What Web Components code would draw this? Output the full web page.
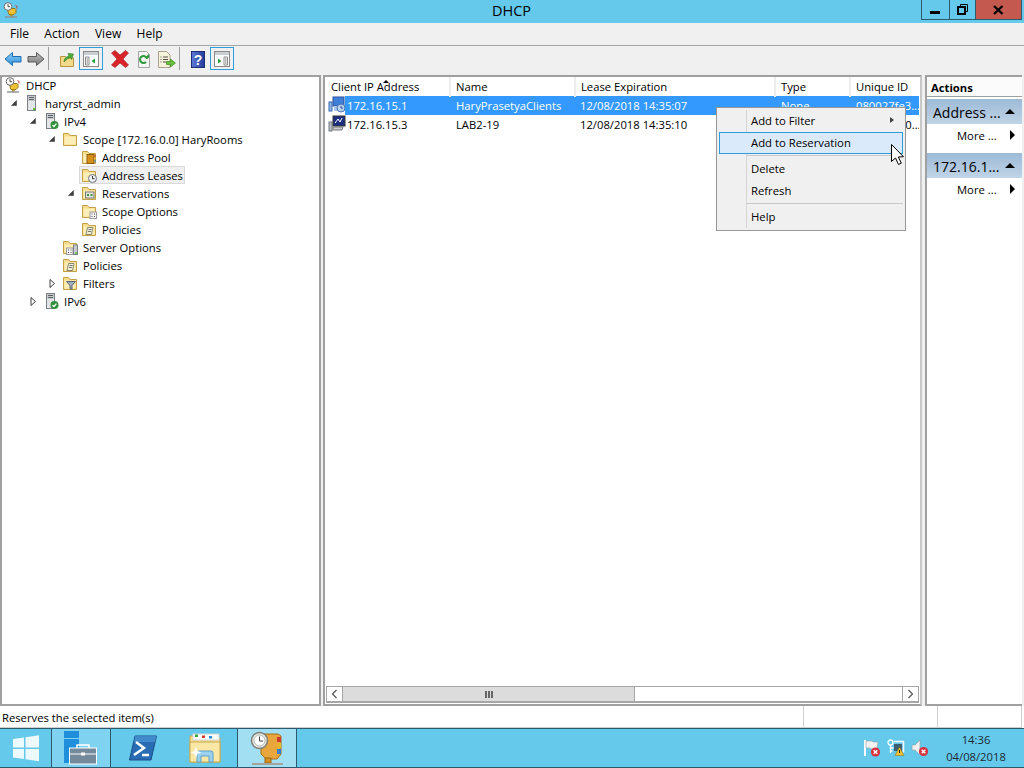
<!DOCTYPE html>
<html>
<head>
<meta charset="utf-8">
<title>DHCP</title>
<style>
  html, body { margin: 0; height: 100%; overflow: hidden; }
  body { font: 11.25px "Open Sans", "Noto Sans", sans-serif; color: #000; }
</style>
</head>
<body>
<dhcp-app>
  <title-bar slot="title">DHCP</title-bar>
  <menu-bar slot="menu"></menu-bar>
  <tool-bar slot="tools"></tool-bar>
  <tree-pane slot="tree"></tree-pane>
  <lease-list slot="list"></lease-list>
  <actions-pane slot="actions"></actions-pane>
  <status-bar slot="status">Reserves the selected item(s)</status-bar>
  <task-bar slot="tasks"></task-bar>
  <context-menu slot="popup"></context-menu>
</dhcp-app>

<script>
const folderBase = `<path d="M1.500 2.500h5l1.500 2h6.500v10h-13z" fill="#f8dd8c" stroke="#c39f45"/><path d="M2.500 5.500h11v8h-11z" fill="#fdeeb8"/>`
const tower = `<rect x="3.500" y=".5" width="8" height="15" fill="#c8ccd0" stroke="#7b8085"/><path d="M5 2.500h5M5 4.500h5" stroke="#5c6166"/><rect x="4" y="6" width="7" height="9" fill="#e3e5e7"/>`
const check = `<circle cx="11.500" cy="12" r="4" fill="#2f8f3a"/><path d="M9.500 12l1.500 1.600 2.400-3" fill="none" stroke="#fff" stroke-width="1.300"/>`
const redX = `<circle cx="11" cy="11.500" r="4.600" fill="#d8323c"/><path d="M9.200 9.700l3.600 3.600M12.800 9.700l-3.600 3.600" stroke="#fff" stroke-width="1.500"/>`
const clockPost = `<path d="M4 6.500h8l1 1v3l-2 2h-5z" fill="#efc234" stroke="#97761a"/><circle cx="5" cy="4.500" r="3.800" fill="#fff" stroke="#6d6d6d"/><path d="M5 2.200v2.500h2" fill="none" stroke="#444"/><path d="M12.500 3.500l1.500 1v2" fill="none" stroke="#c33"/><rect x="7" y="12" width="2.500" height="2.500" fill="#b58a1d"/><path d="M2 15h12" stroke="#8f8f8f" stroke-width="1.400"/>`
const paneWindow = `<rect x="4.500" y="4.500" width="15" height="15" fill="#fbfbfb" stroke="#8a8a8a"/><rect x="5" y="5" width="14" height="3" fill="#c9ced2"/>`

const ICONS = {
  dhcp: [16, clockPost],
  server: [16, tower + `<rect x="9" y="13" width="2" height="2" fill="#5fc23c"/>`],
  ipv: [16, tower + check],
  folder: [16, folderBase],
  pool: [16, folderBase + `<rect x="6" y="5.500" width="7" height="9" fill="#d6901a" stroke="#8f5f10"/><path d="M14 6.500v1" stroke="#d33" stroke-width="2"/><path d="M14 9v1" stroke="#e5b62b" stroke-width="2"/><path d="M14 11.500v1" stroke="#2f7fd0" stroke-width="2"/>`],
  leases: [16, folderBase + `<circle cx="11.500" cy="11.500" r="4" fill="#eef1f3" stroke="#6a7078"/><path d="M11.500 9v2.700h2" fill="none" stroke="#333"/>`],
  reservations: [16, folderBase + `<rect x="4.500" y="7" width="8.500" height="6" fill="#e8e8e0" stroke="#777"/><path d="M6 10h2M9.500 10h2" stroke="#3c8f3c" stroke-width="2"/>`],
  options: [16, folderBase + `<rect x="9" y="9" width="6.500" height="6.500" fill="#f4f4f4" stroke="#9a9a9a"/><path d="M10.500 11h1M13 11h1M10.500 13.500h1M13 13.500h1" stroke="#555"/>`],
  policies: [16, folderBase + `<path d="M6.500 6.500h5.500l-1.500 7h-5.500z" fill="#f0edd8" stroke="#8a8a70"/><path d="M7.500 8.500h3M7 10.500h3" stroke="#777"/>`],
  serverOptions: [16, folderBase + `<rect x="4.500" y="9" width="6.500" height="6.500" fill="#f4f4f4" stroke="#9a9a9a"/><path d="M6 11h1M8.500 11h1M6 13.500h1M8.500 13.500h1" stroke="#555"/><rect x="11.500" y="6" width="4" height="9.500" fill="#c8ccd0" stroke="#7b8085"/><path d="M13 14h2" stroke="#5fc23c" stroke-width="1.500"/>`],
  filters: [16, folderBase + `<path d="M4.500 6.500h9l-3.500 4v4l-2-1v-3z" fill="#9fb1bd" stroke="#5a6670"/>`],
  leaseActive: [18, `<rect x="1" y="6" width="3" height="9" fill="#8fb6e8" stroke="#3b6bb0"/><rect x="5" y="1" width="11" height="9" fill="#3f7fd8" stroke="#28509a"/><rect x="6" y="10" width="6" height="5" fill="#a9c6ee"/><circle cx="13" cy="12" r="4" fill="#bcd3f1" stroke="#4a74b4"/><path d="M13 9.800v2.300h2" fill="none" stroke="#274f8f"/>`],
  leaseClient: [18, `<rect x="1" y="7" width="3" height="9" fill="#b8c0c8" stroke="#707880"/><rect x="5" y="1" width="12" height="10" fill="#1c2f7e" stroke="#333"/><path d="M7 8l3-4 2 3 2-4" stroke="#fff" fill="none"/><path d="M5 12h10l-1 3h-9z" fill="#c9cdd1" stroke="#777"/>`],
  back: [20, `<defs><linearGradient id="bk" x1="0" y1="0" x2="0" y2="1"><stop offset="0" stop-color="#8fd0f7"/><stop offset="1" stop-color="#2f8bd8"/></linearGradient></defs><path d="M2 10l7.500-6.500v4h8.500v5.500h-8.500v3.500z" fill="url(#bk)" stroke="#1d6fb5"/>`],
  forward: [20, `<defs><linearGradient id="fw" x1="0" y1="0" x2="0" y2="1"><stop offset="0" stop-color="#bdbdbd"/><stop offset="1" stop-color="#7a7a7a"/></linearGradient></defs><path d="M18 10l-7.500-6.500v4h-8.500v5.500h8.500v3.500z" fill="url(#fw)" stroke="#5c5c5c"/>`],
  up: [20, `<path d="M3.500 7.500h5l1 1.500h7v8.500h-13z" fill="#f5d98a" stroke="#b8963f"/><path d="M7 13c0-3.500 2.500-5.500 5-6l-1-2.500 5.500.5-2 5.500-1-2c-2.500.5-4 2-6.500 4.500z" fill="#4cb03a" stroke="#2b7322" stroke-width=".6"/>`],
  paneHide: [24, paneWindow + `<path d="M6.500 10h3.500v8h-3.500z" fill="#fff" stroke="#8c8c8c"/><path d="M7.500 12h1.500M7.500 14h1.500M7.500 16h1.500" stroke="#777"/><path d="M16 11.500v5l-3.500-2.500z" fill="#2a9d3c"/>`],
  paneShow: [24, paneWindow + `<path d="M14 10h3.500v8h-3.500z" fill="#fff" stroke="#8c8c8c"/><path d="M15 12h1.500M15 14h1.500M15 16h1.500" stroke="#777"/><path d="M8 11.500v5l3.500-2.500z" fill="#2a9d3c"/>`],
  remove: [20, `<path d="M1.500 4l3.500-2.500 5 4.500 5.500-4.500 3 2.500-5.500 6 5.500 6-3 2.500-5.500-4.500-5 4.500-3.500-2.500 5.500-6z" fill="#d8232a" stroke="#a81a1f" stroke-width=".6"/>`],
  refresh: [20, `<path d="M4.500 2.500h8l3 3v13h-11z" fill="#f6f6f6" stroke="#a3a3a3"/><path d="M13 10a3.500 3.500 0 1 0-1 3" fill="none" stroke="#2f9a3a" stroke-width="2"/><path d="M10.500 9h4.500v-4z" fill="#2f9a3a"/>`],
  exportList: [20, `<path d="M1.500 2.500h8l3.500 3.500v12.500h-11.500z" fill="#f7f3dd" stroke="#a6a28c"/><path d="M3.500 8h1M6 8h5M3.500 10.500h1M6 10.500h5M3.500 13h1M6 13h3" stroke="#55534a"/><path d="M9.500 12.500h4v-2.500l5 4-5 4v-2.500h-4z" fill="#6bbd3e" stroke="#3e8b1f" stroke-width=".7"/>`],
  help: [20, `<defs><linearGradient id="hp" x1="0" y1="0" x2="1" y2="0"><stop offset="0" stop-color="#5d7bd6"/><stop offset="1" stop-color="#233a9a"/></linearGradient></defs><rect x="3.500" y="2.500" width="13" height="16" fill="url(#hp)" stroke="#1c2d75"/><text x="10" y="15.500" font-family="Liberation Sans, sans-serif" font-size="14" font-weight="700" text-anchor="middle" fill="#fff">?</text>`],
  start: [28, `<path d="M1 5l11-1.500v10h-11zM13.500 3.200l13.500-2v12.300h-13.500zM1 15h11v10l-11-1.500zM13.500 15h13.500v12.300l-13.500-2z" fill="#fff" opacity=".88"/>`],
  serverManager: [36, `<rect x="1" y="1" width="15" height="7" fill="#1f8fdc"/><rect x="1" y="9" width="15" height="24" fill="#1f8fdc"/><rect x="6.500" y="18" width="27" height="16" fill="#74899a" stroke="#fff"/><path d="M14 18v-3h12v3" fill="none" stroke="#fff" stroke-width="1.500"/><path d="M7 24h26" stroke="#fff"/><rect x="18" y="22.500" width="4" height="3" fill="#fff"/>`],
  powershell: [30, `<path d="M7 3h21.500l-5.500 24h-21.500z" fill="#2a6cb3" stroke="#184d8a"/><path d="M7 3h21.500l-1.500 6h-21z" fill="#4b97d6" opacity=".7"/><path d="M8 9l8 6-10 7" fill="none" stroke="#fff" stroke-width="2.500"/><path d="M14 22h7" stroke="#fff" stroke-width="2.500"/>`],
  explorer: [34, `<path d="M1 5h14l3 2h13v24h-30z" fill="#f6dd8e" stroke="#c9a94f"/><rect x="4" y="3" width="26" height="6" fill="#fff" stroke="#d6d6d6"/><rect x="6" y="3.500" width="3" height="2.500" fill="#35a53a"/><rect x="13" y="4.500" width="3" height="2.500" fill="#d33f2a"/><rect x="20" y="5" width="3" height="2.500" fill="#2f89d4"/><path d="M1 11h30v20h-30z" fill="#fbe7a6" stroke="#c9a94f"/><path d="M8 31v-9q0-2 2-2h12q2 0 2 2v9h-4v-6h-8v6z" fill="#9ad2ee" stroke="#5aa1cc"/><path d="M7 16l1.500 4 4 1.500-4 1.500-1.500 4-1.500-4-4-1.500 4-1.500z" fill="#fff" opacity=".9"/>`],
  dhcpLarge: [34, `<path d="M11 3h17l3 2v18l-4 5h-11l-5-5z" fill="#e9a63c" stroke="#a66f1b"/><rect x="27" y="6" width="4" height="5" fill="#cf3a2e"/><rect x="27" y="12" width="4" height="5" fill="#e8b62d"/><rect x="27" y="18" width="4" height="5" fill="#3a7fcb"/><circle cx="9.500" cy="9.500" r="8" fill="#e9e9e4" stroke="#7f7f78" stroke-width="1.500"/><circle cx="9.500" cy="9.500" r="5.500" fill="#fff" stroke="#b5b5ae"/><path d="M9.500 5.500v4.500h3.500" fill="none" stroke="#444"/><rect x="15" y="27" width="6" height="5" fill="#d68f22" stroke="#9c6512"/><path d="M2 33h31" stroke="#a4a49c" stroke-width="2"/>`],
  trayFlag: [18, `<path d="M2 1v16" stroke="#fff" stroke-width="2"/><path d="M3 2h6l1 1h5l-1 7h-6l-1-1h-4z" fill="#f2f2f2" stroke="#8c9aa3" stroke-width=".6"/><g transform="translate(1.500 1.500)">${redX}</g>`],
  trayNet: [18, `<circle cx="3.500" cy="3.500" r="2.500" fill="none" stroke="#fff" stroke-width="1.300"/><path d="M3.500 6v8M3.500 9h3M3.500 12h2" stroke="#fff" stroke-width="1.300"/><path d="M7 2.500h9.500v11" fill="none" stroke="#fff" stroke-width="1.500"/><rect x="7" y="5" width="8" height="7" fill="#3d5f73"/><path d="M12.500 8l4.500 8.500h-9z" fill="#f1c232" stroke="#8a6d12" stroke-width=".5"/><path d="M12.500 11v3" stroke="#222"/>`],
  traySound: [18, `<path d="M1 6h3l5-5v15l-5-5h-3z" fill="#f0f0f0" stroke="#8c9aa3" stroke-width=".6"/><g transform="translate(1.500 1)">${redX}</g>`]
}

function el(html) {
  const t = document.createElement('template')
  t.innerHTML = html
  return t
}

class AppIcon extends HTMLElement {
  connectedCallback() {
    const [size, body] = ICONS[this.getAttribute('name')]
    this.attachShadow({ mode: 'open' }).innerHTML = `
      <style>:host { display: inline-flex; flex: none; width: ${size}px; height: ${size}px; } svg { display: block; }</style>
      <svg width="${size}" height="${size}" viewBox="0 0 ${size} ${size}">${body}</svg>`
  }
}
customElements.define('app-icon', AppIcon)

const appTemplate = el(`
  <style>
    :host { display: grid; grid-template-rows: 23px 23px 28px 1fr 22px 40px; height: 768px; width: 1024px; background: #f0f0f0; position: relative; overflow: hidden; }
    .panes { display: grid; grid-template-columns: 321px 600px 97px; column-gap: 2px; padding-top: 1px; min-height: 0; }
    .panes ::slotted(*) { min-width: 0; }
  </style>
  <slot name="title"></slot>
  <slot name="menu"></slot>
  <slot name="tools"></slot>
  <div class="panes">
    <slot name="tree"></slot>
    <slot name="list"></slot>
    <slot name="actions"></slot>
  </div>
  <slot name="status"></slot>
  <slot name="tasks"></slot>
  <slot name="popup"></slot>
`)
customElements.define('dhcp-app', class extends HTMLElement {
  constructor() {
    super()
    this.attachShadow({ mode: 'open' }).appendChild(appTemplate.content.cloneNode(true))
  }
})

const titleTemplate = el(`
  <style>
    :host { display: flex; align-items: flex-start; background: #65c9ec; height: 23px; font-size: 14.5px; }
    app-icon { margin: 2px 0 0 3px; }
    .name { flex: 1; text-align: center; line-height: 22px; padding-left: 83px; }
    .buttons { display: flex; height: 19px; margin-right: 2px; border: solid #2b5a6e; border-width: 0 1px 1px; }
    .b { display: flex; align-items: center; justify-content: center; width: 27px; }
    .b + .b { border-left: 1px solid #2b5a6e; }
    .close { width: 45px; background: #c4594f; }
  </style>
  <app-icon name="dhcp"></app-icon>
  <div class="name"><slot></slot></div>
  <div class="buttons">
    <div class="b"><svg width="11" height="11"><rect x="0" y="7" width="10" height="3"/></svg></div>
    <div class="b" style="width:25px"><svg width="11" height="12"><path d="M3.500 2V.5h7v7H9" fill="none" stroke="#000"/><rect x="1" y="3" width="7" height="7" fill="none" stroke="#000" stroke-width="2"/></svg></div>
    <div class="b close"><svg width="11" height="10"><path d="M1 1l8.500 8M9.500 1l-8.500 8" stroke="#000" stroke-width="2.400"/></svg></div>
  </div>
`)
customElements.define('title-bar', class extends HTMLElement {
  constructor() {
    super()
    this.attachShadow({ mode: 'open' }).appendChild(titleTemplate.content.cloneNode(true))
  }
})

customElements.define('menu-bar', class extends HTMLElement {
  constructor() {
    super()
    this.attachShadow({ mode: 'open' }).innerHTML = `
      <style>
        :host { display: flex; height: 22px; border-bottom: 1px solid #a6a6a6; padding-left: 2.300px; line-height: 21px; font-size: 12px; }
        span { padding: 0 7.700px; }
      </style>
      ${['File', 'Action', 'View', 'Help'].map(m => `<span>${m}</span>`).join('')}`
  }
})

customElements.define('tool-bar', class extends HTMLElement {
  constructor() {
    super()
    const slot = (name, gap) => `<div class="i" style="margin-left:${gap}px"><app-icon name="${name}"></app-icon></div>`
    const on = (name, gap) => `<div class="i on" style="margin-left:${gap}px"><app-icon name="${name}"></app-icon></div>`
    this.attachShadow({ mode: 'open' }).innerHTML = `
      <style>
        :host { display: flex; align-items: flex-start; height: 28px; padding: 1px 0 0 3px; box-sizing: border-box; }
        .i { display: flex; align-items: center; justify-content: center; width: 20px; height: 23px; flex: none; }
        .on { width: 24px; height: 23px; box-sizing: border-box; border: 1px solid #2e9fdc; }
        .on app-icon { margin: -1px; }
        .sep { width: 1px; height: 23px; background: #a0a0a0; margin-left: 2px; flex: none; }
      </style>
      ${slot('back', 0)}${slot('forward', 3)}
      <div class="sep"></div>
      ${slot('up', 8)}${on('paneHide', 2)}
      ${slot('remove', 7)}${slot('refresh', 4)}${slot('exportList', 3)}
      <div class="sep"></div>
      ${slot('help', 8)}${on('paneShow', 2)}`
  }
})

customElements.define('tree-row', class extends HTMLElement {
  constructor() {
    super()
    const level = +this.getAttribute('level')
    const arrow = this.getAttribute('arrow')
    const icon = this.getAttribute('icon')
    const marks = {
      open: '<path d="M6.500 1.500v5h-5z" fill="#404040" stroke="#404040" stroke-width=".6"/>',
      closed: '<path d="M2 .5l4.500 4-4.500 4z" fill="#fff" stroke="#404040"/>'
    }
    this.attachShadow({ mode: 'open' }).innerHTML = `
      <style>
        :host { display: flex; align-items: center; height: 18px; padding-left: ${19 * level + 3}px; }
        .arrow { width: 14px; margin-left: -14px; height: 9px; flex: none; }
        .arrow svg { display: block; }
        .hit { display: flex; align-items: center; height: 16px; padding-right: 1px; margin-left: -2px; padding-left: 1px; border: 1px solid transparent; }
        :host([current]) .hit { background: #f0f0f0; border-color: #d9d9d9; }
        app-icon { margin-right: 5px; }
      </style>
      <div class="arrow">${arrow ? `<svg width="9" height="9">${marks[arrow]}</svg>` : ''}</div>
      <div class="hit"><app-icon name="${icon}"></app-icon><slot></slot></div>`
  }
})

customElements.define('tree-pane', class extends HTMLElement {
  constructor() {
    super()
    const rows = [
      [0, '', 'dhcp', 'DHCP'],
      [1, 'open', 'server', 'haryrst_admin'],
      [2, 'open', 'ipv', 'IPv4'],
      [3, 'open', 'folder', 'Scope [172.16.0.0] HaryRooms'],
      [4, '', 'pool', 'Address Pool'],
      [4, '', 'leases', 'Address Leases', true],
      [4, 'open', 'reservations', 'Reservations'],
      [4, '', 'options', 'Scope Options'],
      [4, '', 'policies', 'Policies'],
      [3, '', 'serverOptions', 'Server Options'],
      [3, '', 'policies', 'Policies'],
      [3, 'closed', 'filters', 'Filters'],
      [2, 'closed', 'ipv', 'IPv6']
    ]
    this.attachShadow({ mode: 'open' }).innerHTML = `
      <style>
        :host { display: block; box-sizing: border-box; background: #fff; border: 2px solid #a0a0a0; overflow: hidden; }
        .rows { margin-top: -1px; }
      </style>
      <div class="rows">
      ${rows.map(([l, a, i, t, c]) => `<tree-row level="${l}" arrow="${a}" icon="${i}" ${c ? 'current' : ''}>${t}</tree-row>`).join('')}
      </div>`
  }
})

customElements.define('lease-row', class extends HTMLElement {
  constructor() {
    super()
    const cells = this.getAttribute('cells').split('|')
    this.attachShadow({ mode: 'open' }).innerHTML = `
      <style>
        :host { display: grid; grid-template-columns: 17px 106px 124px 201px 75px 1fr; height: 19px; line-height: 19px; padding-left: 2px; white-space: nowrap; }
        .c { padding-left: 5px; overflow: hidden; }
        .first { padding-left: 2px; }
        .band { grid-column: 2 / -1; display: grid; grid-template-columns: subgrid; }
        :host([selected]) .band { background: #3399ff; color: #fff; }
      </style>
      <app-icon name="${this.getAttribute('icon')}"></app-icon>
      <div class="band">
        <div class="c first">${cells[0]}</div>
        ${cells.slice(1).map(c => `<div class="c">${c}</div>`).join('')}
      </div>`
  }
})

customElements.define('lease-list', class extends HTMLElement {
  constructor() {
    super()
    this.attachShadow({ mode: 'open' }).innerHTML = `
      <style>
        :host { display: flex; flex-direction: column; box-sizing: border-box; background: #fff; border: 2px solid #a0a0a0; border-right-color: #c8c8c8; padding: 0 1px 1px 1px; margin-right: 1px; position: relative; }
        .head { display: grid; grid-template-columns: 125px 125px 200px 75px 1fr; height: 19px; line-height: 20px; flex: none; }
        .head div { padding-left: 5px; border-right: 2px solid #ececec; position: relative; }
        .head div:last-child { border-right: 0; }
        .sort { position: absolute; left: 57px; top: 3px; width: 0; height: 0; border: 3.500px solid transparent; border-bottom: 3.500px solid #000; border-top: 0; }
        .rows { flex: 1; }
        .scroll { display: flex; height: 17px; flex: none; box-sizing: border-box; border: 2px solid #a6a6a6; border-width: 1px 1px 2px; background: #fff; }
        .btn { width: 15px; display: flex; align-items: center; justify-content: center; flex: none; }
        .thumb { width: 293px; background: #dcdcdc; border: solid #a6a6a6; border-width: 0 1px; display: flex; align-items: center; justify-content: center; gap: 1px; flex: none; box-sizing: border-box; }
        .thumb i { width: 2px; height: 7px; background: #666; }
        .track { flex: 1; }
      </style>
      <div class="head">
        <div>Client IP Address<span class="sort"></span></div><div>Name</div><div>Lease Expiration</div><div>Type</div><div>Unique ID</div>
      </div>
      <div class="rows">
        <lease-row selected icon="leaseActive" cells="172.16.15.1|HaryPrasetyaClients|12/08/2018 14:35:07|None|080027fe3..."></lease-row>
        <lease-row icon="leaseClient" cells="172.16.15.3|LAB2-19|12/08/2018 14:35:10||080027fb0..."></lease-row>
      </div>
      <div class="scroll">
        <div class="btn"><svg width="7" height="10"><path d="M5.500 1l-4 4 4 4" fill="none" stroke="#555" stroke-width="1.200"/></svg></div>
        <div class="thumb"><i></i><i></i><i></i></div>
        <div class="track"></div>
        <div class="btn" style="border-left:1px solid #a6a6a6"><svg width="7" height="10"><path d="M1.500 1l4 4-4 4" fill="none" stroke="#555" stroke-width="1.200"/></svg></div>
      </div>`
  }
})

customElements.define('action-group', class extends HTMLElement {
  constructor() {
    super()
    this.attachShadow({ mode: 'open' }).innerHTML = `
      <style>
        :host { display: block; }
        .band { display: flex; align-items: center; justify-content: space-between; height: 25px; padding: 0 7px 0 6px; font-size: 14px; background: linear-gradient(#9dbad6, #c0d4e7); }
        .band span:first-child { padding-top: 2px; }
        .tri { width: 0; height: 0; border: 5px solid transparent; border-top: 0; border-bottom: 5px solid #000; }
        .more { display: flex; align-items: center; height: 22px; padding-left: 30px; gap: 13px; margin-bottom: 7px; }
        .go { width: 0; height: 0; border: 5px solid transparent; border-right: 0; border-left: 5px solid #000; }
      </style>
      <div class="band"><span>${this.getAttribute('label')}</span><span class="tri"></span></div>
      <div class="more"><span>More ...</span><span class="go"></span></div>`
  }
})

customElements.define('actions-pane', class extends HTMLElement {
  constructor() {
    super()
    this.attachShadow({ mode: 'open' }).innerHTML = `
      <style>
        :host { display: block; box-sizing: border-box; background: #fff; border: 2px solid #a0a0a0; border-width: 2px 0 2px 2px; overflow: hidden; white-space: nowrap; }
        h2 { margin: 0 0 2px; font: 700 11.25px "Open Sans", "Noto Sans", sans-serif; line-height: 21px; padding-left: 4px; height: 19px; background: #fbfbfb; border-bottom: 1px solid #a0a0a0; }
      </style>
      <h2>Actions</h2>
      <action-group label="Address ..."></action-group>
      <action-group label="172.16.1..."></action-group>`
  }
})

customElements.define('status-bar', class extends HTMLElement {
  constructor() {
    super()
    this.attachShadow({ mode: 'open' }).innerHTML = `
      <style>
        :host { display: grid; grid-template-columns: 804px 134px 84px; height: 22px; background: #fff; line-height: 23px; box-sizing: border-box; }
        div { padding-left: 2px; border-right: 1px solid #cfcfcf; border-bottom: 1px solid #cfcfcf; overflow: hidden; }
      </style>
      <div><slot></slot></div><div></div><div></div>`
  }
})

customElements.define('task-bar', class extends HTMLElement {
  constructor() {
    super()
    this.attachShadow({ mode: 'open' }).innerHTML = `
      <style>
        :host { display: flex; align-items: stretch; height: 40px; box-sizing: border-box; background: #65c9ec; border: solid #2b5a6e; border-width: 1px 0; }
        .t { display: flex; align-items: center; justify-content: center; flex: none; border-right: 1px solid #2b5a6e; }
        .plain { border-right: 0; }
        .hot { background: #7fd3f0; }
        .active { background: #a3dff3; border-left: 1px solid #2b5a6e; }
        .tray { margin-left: auto; display: flex; align-items: center; gap: 6px; padding-right: 10px; }
        .clock { width: 76px; text-align: center; line-height: 17px; color: #1c2a33; margin-left: 3px; }
      </style>
      <div class="t" style="width:51px"><app-icon name="start"></app-icon></div>
      <div class="t hot" style="width:58px"><app-icon name="serverManager"></app-icon></div>
      <div class="t plain" style="width:63px"><app-icon name="powershell"></app-icon></div>
      <div class="t plain" style="width:63px"><app-icon name="explorer"></app-icon></div>
      <div class="t active" style="width:58px"><app-icon name="dhcpLarge"></app-icon></div>
      <div class="tray">
        <app-icon name="trayFlag"></app-icon>
        <app-icon name="trayNet"></app-icon>
        <app-icon name="traySound"></app-icon>
        <div class="clock">14:36<br>04/08/2018</div>
      </div>`
  }
})

customElements.define('context-menu', class extends HTMLElement {
  constructor() {
    super()
    this.attachShadow({ mode: 'open' }).innerHTML = `
      <style>
        :host { position: absolute; left: 716px; top: 107px; width: 190px; height: 124px; box-sizing: border-box; background: #f0f0f0; border: 1px solid #979797; padding: 2px; font-size: 11.3px; }
        .gutter { position: absolute; left: 29px; top: 2px; bottom: 2px; width: 1px; background: #d4d4d4; }
        .item { display: flex; align-items: center; justify-content: space-between; height: 22px; padding: 0 9px 2px 32px; box-sizing: border-box; position: relative; }
        .hi { background: #dbeafb; border: 1px solid #2b9ddb; padding-left: 31px; padding-bottom: 1px; }
        .sep { height: 1px; background: #c8c8c8; margin: 1px 0 2px 28px; position: relative; }
        .sub { width: 0; height: 0; border: 3.500px solid transparent; border-right: 0; border-left: 4px solid #404040; }
        svg { position: absolute; left: 174px; top: 36px; }
      </style>
      <div class="gutter"></div>
      <div class="item">Add to Filter<span class="sub"></span></div>
      <div class="item hi">Add to Reservation</div>
      <div class="sep"></div>
      <div class="item">Delete</div>
      <div class="item">Refresh</div>
      <div class="sep"></div>
      <div class="item">Help</div>
      <svg width="14" height="22"><path d="M.5 .5v17l4-3.500 3 6.500 2.800-1.300-3-6.200 5.200-.3z" fill="#fff" stroke="#000"/></svg>`
  }
})
</script>
</body>
</html>
